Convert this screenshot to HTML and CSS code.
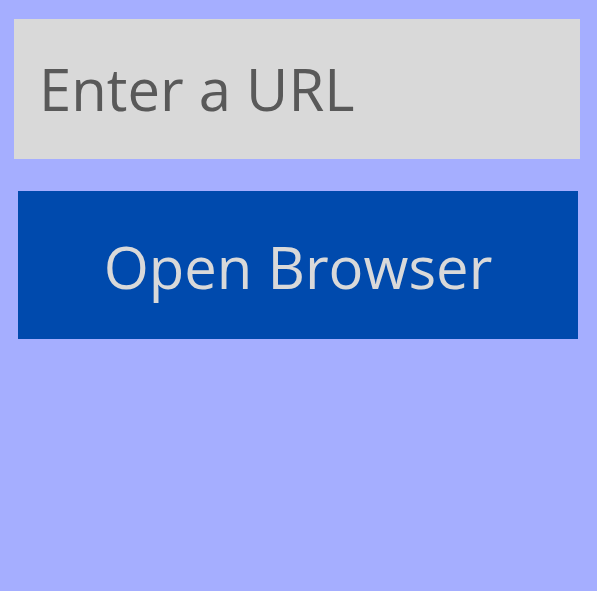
FILE: index.html
```html
<!DOCTYPE html>
<html>
<head>
<meta charset="utf-8">
<link rel="stylesheet" href="styles.css">
</head>
<body>
<main class="app">
  <div class="url-field"><span class="placeholder">Enter a URL</span></div>
  <button class="open-btn">Open Browser</button>
</main>
</body>
</html>
```
FILE: styles.css
```css
html, body {
  margin: 0;
  padding: 0;
  background: #a5aeff;
  height: 100%;
}
.app {
  padding: 19px 17px 0 14px;
  display: flex;
  flex-direction: column;
  font-family: "Open Sans", "Noto Sans", sans-serif;
}
.url-field {
  width: 566px;
  height: 140px;
  background: #d9d9d9;
  display: flex;
  align-items: center;
  padding-left: 25px;
  box-sizing: border-box;
}
.placeholder {
  color: #595959;
  font-size: 58px;
  line-height: 1;
}
.open-btn {
  margin: 32px 0 0 4px;
  width: 560px;
  height: 148px;
  border: none;
  background: #004aad;
  color: #d9d9d9;
  font-family: "Open Sans", "Noto Sans", sans-serif;
  font-size: 58px;
  line-height: 1;
  padding: 4px 0 0 0;
  display: flex;
  align-items: center;
  justify-content: center;
}
```
